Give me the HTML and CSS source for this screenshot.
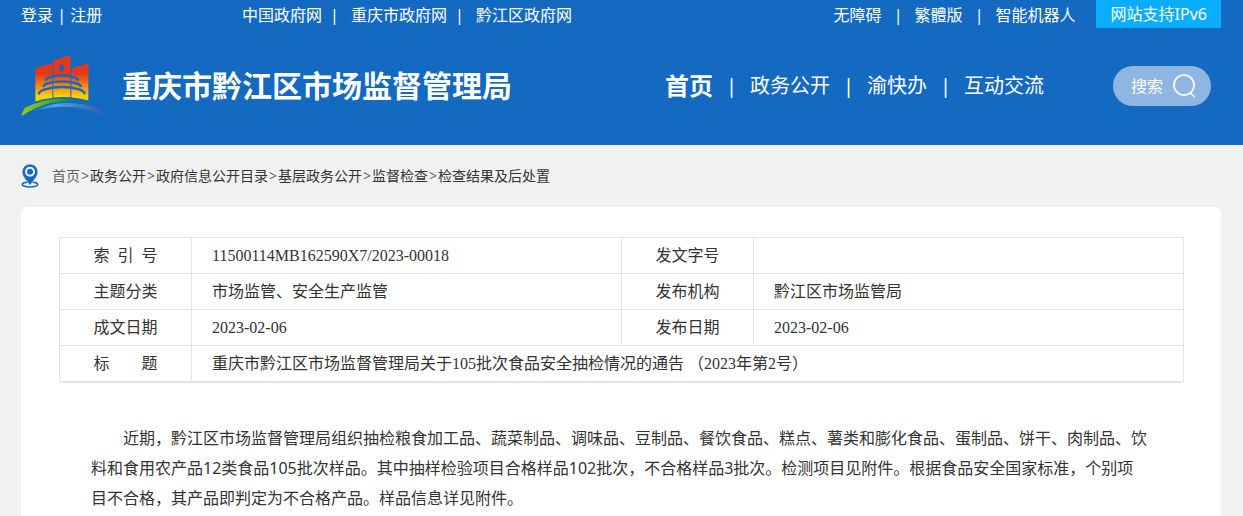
FILE: index.html
```html
<!DOCTYPE html>
<html lang="zh-CN">
<head>
<meta charset="utf-8">
<meta name="viewport" content="width=device-width, initial-scale=1">
<title>重庆市黔江区市场监督管理局</title>
<link rel="stylesheet" href="styles.css">
</head>
<body>
<header class="header">
  <div class="container">
    <div class="topbar">
      <div class="login"><a href="#">登录</a> | <a href="#">注册</a></div>
      <nav class="gov-links">
        <a href="#">中国政府网</a><span>|</span><a href="#">重庆市政府网</a><span>|</span><a href="#">黔江区政府网</a>
      </nav>
      <div class="tools">
        <a href="#">无障碍</a><span>|</span><a href="#">繁體版</a><span>|</span><a href="#">智能机器人</a>
      </div>
      <div class="ipv6">网站支持IPv6</div>
    </div>
    <div class="masthead">
      <svg class="logo" viewBox="62 164 243 186" aria-hidden="true">
        <defs>
          <linearGradient id="tower" gradientUnits="userSpaceOnUse" x1="0" y1="165" x2="0" y2="302">
            <stop offset="0.4" stop-color="#e2391c"/>
            <stop offset="0.68" stop-color="#f28a12"/>
            <stop offset="0.9" stop-color="#ffd000"/>
          </linearGradient>
          <linearGradient id="hill" x1="0" y1="0" x2="1" y2="0">
            <stop offset="0" stop-color="#9acb1c"/>
            <stop offset="0.6" stop-color="#35a832"/>
            <stop offset="1" stop-color="#08794a"/>
          </linearGradient>
          <linearGradient id="river" x1="0" y1="0" x2="1" y2="0">
            <stop offset="0" stop-color="#2d86d2"/>
            <stop offset="0.3" stop-color="#5ba4df"/>
            <stop offset="0.65" stop-color="#4680c4"/>
            <stop offset="1" stop-color="#2f62ae"/>
          </linearGradient>
        </defs>
        <path fill="url(#tower)" d="M105 203 156 189V302H105ZM159 180 210 165V300H159ZM213 205 264 188V300H213Z"/>
        <ellipse cx="184" cy="202" rx="7" ry="10" fill="#1469c1"/>
        <g fill="none" stroke="#1469c1" stroke-width="7">
          <path d="M136 241Q138 233 150 230Q184 221 220 230Q232 233 234 241"/>
          <path d="M129 260Q131 251 146 248Q184 238 224 248Q240 251 242 260"/>
          <path d="M115 282Q116 272 134 267Q184 253 236 267Q252 272 254 282"/>
        </g>
        <path fill="#1469c1" d="M104 304Q150 290 190 290Q232 290 266 302V308H104Z"/>
        <path fill="url(#hill)" d="M63 348Q67 332 74 322Q120 299 168 295Q206 292 235 301Q190 299 148 309Q104 320 63 348Z"/>
        <path fill="url(#river)" d="M104 331Q146 309 200 308Q250 309 298 325Q301 334 304 348Q270 326 224 321Q164 315 104 331Z"/>
      </svg>
      <h1 class="site-name">重庆市黔江区市场监督管理局</h1>
      <nav class="main-nav">
        <a class="current" href="#">首页</a><span>|</span><a href="#">政务公开</a><span>|</span><a href="#">渝快办</a><span>|</span><a href="#">互动交流</a>
      </nav>
      <button class="search" type="button">搜索
        <svg viewBox="0 0 24 26" aria-hidden="true"><circle cx="12" cy="12" r="10"/><path d="M18 19.500 22.500 24"/></svg>
      </button>
    </div>
  </div>
</header>

<main class="container page">
  <nav class="breadcrumb">
    <svg viewBox="0 0 18 24" aria-hidden="true">
      <ellipse cx="9" cy="20.500" rx="7.700" ry="2.400" fill="none" stroke="#1469c1" stroke-width="1.500"/>
      <path fill="#1469c1" stroke="#f1f1f1" stroke-width="0.700" d="M9 0A8 8 0 0 1 17 8C17 12 13 16 9 21.500C5 16 1 12 1 8A8 8 0 0 1 9 0Z"/>
      <circle cx="9" cy="7.800" r="4" fill="none" stroke="#f1f1f1" stroke-width="2"/>
    </svg>
    <a class="home" href="#">首页</a><span>&gt;</span><a href="#">政务公开</a><span>&gt;</span><a href="#">政府信息公开目录</a><span>&gt;</span><a href="#">基层政务公开</a><span>&gt;</span><a href="#">监督检查</a><span>&gt;</span><a href="#">检查结果及后处置</a>
  </nav>

  <article class="card">
    <table class="meta">
      <colgroup><col class="label-col"><col><col class="label-col"><col></colgroup>
      <tr><th>索&nbsp; 引&nbsp; 号</th><td>11500114MB162590X7/2023-00018</td><th>发文字号</th><td></td></tr>
      <tr><th>主题分类</th><td>市场监管、安全生产监管</td><th>发布机构</th><td>黔江区市场监管局</td></tr>
      <tr><th>成文日期</th><td>2023-02-06</td><th>发布日期</th><td>2023-02-06</td></tr>
      <tr><th>标　　题</th><td colspan="3">重庆市黔江区市场监督管理局关于105批次食品安全抽检情况的通告 （2023年第2号）</td></tr>
    </table>
    <p class="body-text">近期，黔江区市场监督管理局组织抽检粮食加工品、蔬菜制品、调味品、豆制品、餐饮食品、糕点、薯类和膨化食品、蛋制品、饼干、肉制品、饮料和食用农产品12类食品105批次样品。其中抽样检验项目合格样品102批次，不合格样品3批次。检测项目见附件。根据食品安全国家标准，个别项目不合格，其产品即判定为不合格产品。样品信息详见附件。</p>
  </article>
</main>
</body>
</html>
```
FILE: styles.css
```css
* {
  box-sizing: border-box;
}

body {
  display: flex;
  flex-direction: column;
  min-height: 100vh;
  margin: 0;
  background: #f1f1f1;
  color: #333;
  font: 16px/30px "Noto Sans", "Noto Sans CJK SC", sans-serif;
}

a {
  color: inherit;
  text-decoration: none;
}

.container {
  margin: 0 22px 0 21px;
}

.header {
  background: #1469c1;
  color: #fff;
}

.topbar {
  display: flex;
  height: 30px;
  white-space: nowrap;
}

.login {
  width: 221px;
}

.gov-links,
.tools {
  display: flex;
}

.gov-links span {
  width: 29px;
  padding-right: 4px;
  text-align: center;
}

.tools {
  margin-left: auto;
}

.tools span {
  width: 33px;
  text-align: center;
}

.ipv6 {
  height: 28px;
  margin-left: 20px;
  padding: 0 14px 0 15px;
  background: #0aaeff;
  line-height: 28px;
}

.masthead {
  display: flex;
  align-items: center;
  height: 115px;
  padding: 0 10px 4px 0;
  white-space: nowrap;
}

.logo {
  width: 81px;
  height: 62px;
}

.site-name {
  margin: 0 0 0 20px;
  font-size: 30px;
  line-height: 40px;
}

.main-nav {
  display: flex;
  align-items: center;
  margin-left: auto;
  font-size: 20px;
}

.main-nav .current {
  font-size: 24px;
  font-weight: 700;
}

.main-nav span {
  width: 37px;
  text-align: center;
}

.search {
  display: flex;
  align-items: center;
  justify-content: space-between;
  width: 98px;
  height: 40px;
  margin-left: 69px;
  padding: 0 15px 0 18px;
  border: 0;
  border-radius: 20px;
  background: #8fb6e1;
  color: #fff;
  font: inherit;
}

.search svg {
  width: 24px;
  height: 26px;
  fill: none;
  stroke: #fff;
  stroke-width: 1.6;
}

.page {
  display: flex;
  flex: 1;
  flex-direction: column;
}

.breadcrumb {
  display: flex;
  align-items: center;
  height: 62px;
  font-size: 14px;
}

.breadcrumb svg {
  width: 18px;
  height: 24px;
  margin-right: 13px;
}

.breadcrumb span {
  width: 10px;
  text-align: center;
}

.breadcrumb span,
.breadcrumb .home {
  color: #666;
}

.card {
  flex: 1;
  padding: 30px 37px 0 38px;
  border-radius: 6px 6px 0 0;
  background: #fff;
}

.meta {
  width: 100%;
  border-collapse: collapse;
  table-layout: fixed;
  box-shadow: 0 3px 0 -2px #e4e4e4;
  font-family: "Liberation Serif", "Noto Sans CJK SC", serif;
  line-height: 24px;
}

.label-col {
  width: 132px;
}

.meta th,
.meta td {
  height: 36px;
  padding: 0 20px;
  border: 1px solid #e4e4e4;
  font-weight: 400;
  text-align: left;
}

.meta th {
  padding: 0;
  text-align: center;
}

.body-text {
  margin: 41px 36px 0 32px;
  text-indent: 2em;
}
```
